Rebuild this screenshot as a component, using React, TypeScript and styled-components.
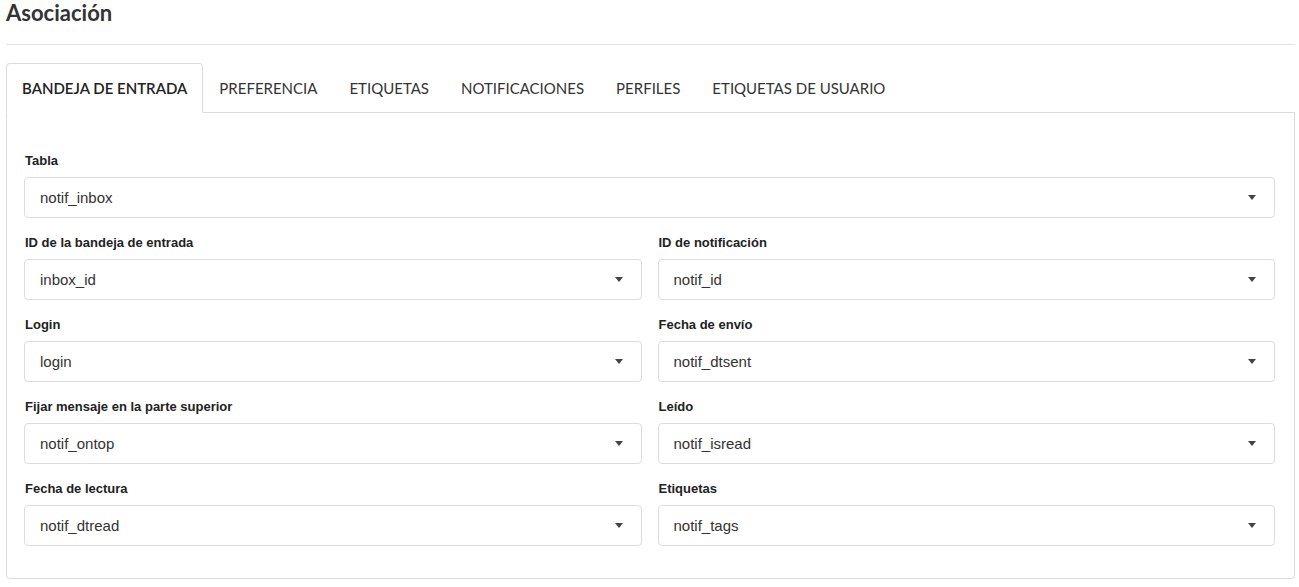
import React from 'react';
import styled, { createGlobalStyle } from 'styled-components';

const GlobalStyle = createGlobalStyle`
  html, body {
    margin: 0;
    padding: 0;
    background: #fff;
  }
  body {
    font-family: 'Liberation Sans', Arial, sans-serif;
    color: #333;
  }
  * {
    box-sizing: border-box;
  }
`;

const PageTag = styled.div`
  padding: 0 4px 0 6px;
`;

const TitleTag = styled.h1`
  margin: 0;
  height: 45px;
  font-family: Lato, 'Noto Sans', sans-serif;
  font-size: 22px;
  font-weight: 700;
  line-height: 26px;
  color: #333;
  border-bottom: 1px solid #e3e3e3;
`;

const TabsTag = styled.div`
  display: flex;
  margin-top: 18px;
`;

const TabTag = styled.div<{ $active?: boolean }>`
  position: relative;
  z-index: ${({ $active }) => ($active ? 1 : 0)};
  height: 50px;
  padding: 0 15px;
  display: flex;
  align-items: center;
  font-family: Lato, 'Noto Sans', sans-serif;
  font-size: 15px;
  font-weight: ${({ $active }) => ($active ? 600 : 400)};
  color: ${({ $active }) => ($active ? '#222' : '#333')};
  text-transform: uppercase;
  border: 1px solid ${({ $active }) => ($active ? '#ddd' : 'transparent')};
  border-bottom-color: ${({ $active }) => ($active ? '#fff' : 'transparent')};
  border-radius: 4px 4px 0 0;
  margin-bottom: -1px;
  background: ${({ $active }) => ($active ? '#fff' : 'transparent')};
  cursor: pointer;
`;

const PanelTag = styled.div`
  border: 1px solid #ddd;
  border-radius: 0 0 4px 4px;
  padding: 40px 19px 32px 17px;
`;

const GridTag = styled.div`
  display: grid;
  grid-template-columns: 1fr 1fr;
  column-gap: 16px;
  row-gap: 17px;
`;

const FieldTag = styled.div<{ $wide?: boolean }>`
  grid-column: ${({ $wide }) => ($wide ? '1 / -1' : 'auto')};
`;

const LabelTag = styled.div`
  font-size: 13px;
  font-weight: 700;
  line-height: 15px;
  color: #222;
  margin-bottom: 9px;
  padding-left: 1px;
`;

const SelectTag = styled.div`
  height: 41px;
  border: 1px solid #ddd;
  border-radius: 4px;
  display: flex;
  align-items: center;
  justify-content: space-between;
  padding: 0 18px 0 15px;
  font-size: 15px;
  color: #333;
  cursor: pointer;
`;

const CaretTag = styled.span`
  width: 0;
  height: 0;
  border-left: 4px solid transparent;
  border-right: 4px solid transparent;
  border-top: 5px solid #444;
`;

const FIELDS: { label: string; value: string; wide?: boolean }[] = [
  { label: 'Tabla', value: 'notif_inbox', wide: true },
  { label: 'ID de la bandeja de entrada', value: 'inbox_id' },
  { label: 'ID de notificación', value: 'notif_id' },
  { label: 'Login', value: 'login' },
  { label: 'Fecha de envío', value: 'notif_dtsent' },
  { label: 'Fijar mensaje en la parte superior', value: 'notif_ontop' },
  { label: 'Leído', value: 'notif_isread' },
  { label: 'Fecha de lectura', value: 'notif_dtread' },
  { label: 'Etiquetas', value: 'notif_tags' },
];

const TABS = [
  'Bandeja de entrada',
  'Preferencia',
  'Etiquetas',
  'Notificaciones',
  'Perfiles',
  'Etiquetas de usuario',
];

export default function App() {
  const [activeTab, setActiveTab] = React.useState(0);

  return (
    <PageTag>
      <GlobalStyle />
      <TitleTag>Asociación</TitleTag>
      <TabsTag>
        {TABS.map((tab, i) => (
          <TabTag key={tab} $active={i === activeTab} onClick={() => setActiveTab(i)}>
            {tab}
          </TabTag>
        ))}
      </TabsTag>
      <PanelTag>
        <GridTag>
          {FIELDS.map((field) => (
            <FieldTag key={field.label} $wide={field.wide}>
              <LabelTag>{field.label}</LabelTag>
              <SelectTag>
                {field.value}
                <CaretTag />
              </SelectTag>
            </FieldTag>
          ))}
        </GridTag>
      </PanelTag>
    </PageTag>
  );
}
